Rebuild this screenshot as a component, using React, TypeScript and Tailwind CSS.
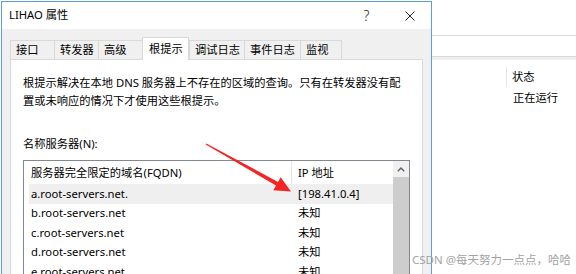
import React from 'react';

const font = "font-['Noto_Sans','Noto_Sans_CJK_SC',sans-serif]";

const tabs = [
  { label: '接口', w: 'w-[44px]' },
  { label: '转发器', w: 'w-[44px]' },
  { label: '高级', w: 'w-[44px]' },
  { label: '根提示', w: 'w-[47px]', active: true },
  { label: '调试日志', w: 'w-[55px]' },
  { label: '事件日志', w: 'w-[56px]' },
  { label: '监视', w: 'w-[42px]', last: true },
];

const rows = [
  { name: 'a.root-servers.net.', ip: '[198.41.0.4]', hover: true },
  { name: 'b.root-servers.net', ip: '未知' },
  { name: 'c.root-servers.net', ip: '未知' },
  { name: 'd.root-servers.net', ip: '未知' },
  { name: 'e.root-servers.net', ip: '未知' },
];

function Dialog() {
  return (
    <div className="mt-[1px] ml-[1px] w-[431px] h-[300px] shrink-0 flex flex-col border-l border-t border-r border-[#5b9fe3]">
      {/* title bar */}
      <div className="h-[28px] bg-white flex items-center justify-between">
        <span className="pl-[7px] text-[11.25px] text-black">LIHAO 属性</span>
        <div className="flex h-full">
          <div className="w-[43px] h-full flex items-center justify-center text-[14px] font-light text-[#222]">?</div>
          <div className="w-[43px] h-full flex items-center justify-center">
            <svg width="10" height="10" viewBox="0 0 10 10">
              <path d="M0.5 0.5L9.5 9.5M9.5 0.5L0.5 9.5" stroke="#222" strokeWidth="1" fill="none" />
            </svg>
          </div>
        </div>
      </div>

      {/* body */}
      <div className="flex-1 bg-[#f0f0f0] flex flex-col pt-[8px]">
        {/* tabs */}
        <div className="h-[22px] pl-[8px] flex items-end">
          {tabs.map((t) =>
            t.active ? (
              <div
                key={t.label}
                className={`${t.w} h-[23px] -mb-px relative z-10 bg-white border-l border-t border-r border-[#d9d9d9] pl-[6px] flex items-center text-[11.25px] text-black`}
              >
                {t.label}
              </div>
            ) : (
              <div
                key={t.label}
                className={`${t.w} h-[19px] bg-[#f0f0f0] border-l border-t ${t.last ? 'border-r' : ''} border-[#d9d9d9] pl-[5px] pt-[1px] flex items-center text-[11.25px] text-black`}
              >
                {t.label}
              </div>
            )
          )}
        </div>

        {/* panel */}
        <div className="ml-[8px] w-[413px] flex-1 bg-white border border-[#d9d9d9] pl-[12px] pt-[14px] text-[11.25px] leading-[18px] text-black">
          <p>
            根提示解决在本地 DNS 服务器上不存在的区域的查询。只有在转发器没有配
            <br />
            置或未响应的情况下才使用这些根提示。
          </p>
          <div className="mt-[25px]">名称服务器(N):</div>

          {/* list */}
          <div className="mt-[7px] w-[387px] h-[140px] border border-[#828790] flex">
            <div className="flex-1 flex flex-col">
              <div className="h-[23px] flex items-center">
                <div className="w-[268px] h-full pl-[7px] flex items-center border-r border-[#e5e5e5]">
                  服务器完全限定的域名(FQDN)
                </div>
                <div className="pl-[6px]">IP 地址</div>
              </div>
              {rows.map((r) => (
                <div
                  key={r.name}
                  className={`ml-[5px] h-[19.5px] flex items-center ${r.hover ? 'bg-[#efefef]' : ''}`}
                >
                  <div className="w-[263px] pl-[2px]">{r.name}</div>
                  <div className="pl-[6px]">{r.ip}</div>
                </div>
              ))}
            </div>
            {/* scrollbar */}
            <div className="w-[16px] bg-[#f0f0f0] flex flex-col">
              <div className="h-[16px] flex items-center justify-center">
                <svg width="8" height="5" viewBox="0 0 8 5">
                  <path d="M0.8 4.2L4 1L7.2 4.2" stroke="#606060" strokeWidth="1.4" fill="none" />
                </svg>
              </div>
              <div className="flex-1 bg-[#cdcdcd]" />
            </div>
          </div>
        </div>
      </div>
    </div>
  );
}

function BehindWindow() {
  return (
    <div className="flex-1 flex flex-col bg-white text-[11.25px] text-black">
      <div className="h-[36px] border-b border-[#dadada]" />
      <div className="h-[20px]" />
      <div className="h-[4px] border-t border-[#d8d8d8] bg-[#efefef]" />
      <div className="h-[6px]" />
      <div className="h-[22px] flex items-center">
        <div className="w-[75px] h-[20px] border-r border-[#e5e5e5]" />
        <div className="pl-[5px]">状态</div>
      </div>
      <div className="h-[20px] flex items-center pl-[81px]">正在运行</div>
    </div>
  );
}

export default function App() {
  return (
    <div className={`relative w-[576px] h-[274px] overflow-hidden bg-white flex ${font}`}>
      <Dialog />
      <BehindWindow />

      {/* red annotation arrow */}
      <svg className="absolute inset-0 pointer-events-none" width="576" height="274" viewBox="0 0 576 274">
        <polygon
          points="206.3,143.5 278,181.9 280.7,177.2 291,191.5 273.3,190.2 276,185.5 205.7,144.5"
          fill="#f42424"
        />
      </svg>

      {/* watermark */}
      <div className="absolute left-[412px] top-[252px] text-[11.5px] leading-[16px] text-[#a3a3a3] whitespace-nowrap">
        CSDN @每天努力一点点，哈哈
      </div>
    </div>
  );
}
